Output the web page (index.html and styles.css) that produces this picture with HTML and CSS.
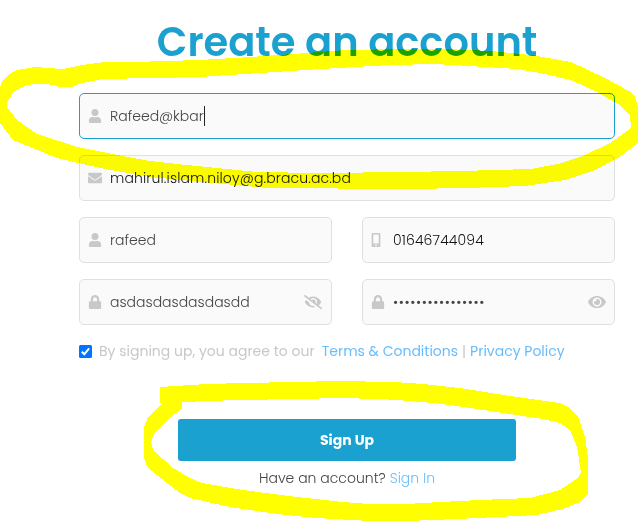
FILE: index.html
```
<!DOCTYPE html>
<html lang="en">
<head>
<meta charset="utf-8">
<title>Create an account</title>
<link rel="stylesheet" href="styles.css">
</head>
<body>
<svg class="sprite" aria-hidden="true">
  <symbol id="user" viewBox="0 0 448 512"><path d="M224 256a128 128 0 1 0 0-256 128 128 0 0 0 0 256zm90 32h-17a174 174 0 0 1-146 0h-17C60 288 0 348 0 422v42c0 27 21 48 48 48h352c27 0 48-21 48-48v-42c0-74-60-134-134-134z"/></symbol>
  <symbol id="mail" viewBox="0 0 512 512"><path d="M502 191c4-3 10 0 10 5v204c0 27-21 48-48 48H48c-27 0-48-21-48-48V196c0-5 6-8 10-5 22 17 52 40 155 114 21 15 57 48 91 48s71-33 91-48c103-74 133-97 155-114zM256 320c23 0 57-29 74-42 133-96 143-105 173-128 6-5 9-12 9-19v-19c0-27-21-48-48-48H48c-27 0-48 21-48 48v19c0 7 3 14 9 19 30 23 40 32 173 128 17 13 51 42 74 42z"/></symbol>
  <symbol id="phone" viewBox="0 0 320 512"><path fill-rule="evenodd" d="M272 0H48C21 0 0 21 0 48v416c0 27 21 48 48 48h224c27 0 48-21 48-48V48c0-27-21-48-48-48zM160 480a32 32 0 1 1 0-64 32 32 0 0 1 0 64zm100-108c0 7-5 12-12 12H72c-7 0-12-5-12-12V66c0-7 5-12 12-12h176c7 0 12 5 12 12z"/></symbol>
  <symbol id="lock" viewBox="0 0 448 512"><path fill-rule="evenodd" d="M400 224h-24v-72a152 152 0 0 0-304 0v72H48c-27 0-48 21-48 48v192c0 27 21 48 48 48h352c27 0 48-21 48-48V272c0-27-21-48-48-48zm-104 0H152v-72a72 72 0 0 1 144 0z"/></symbol>
  <symbol id="eye" viewBox="0 0 576 512"><path fill-rule="evenodd" d="M572 241C518 136 411 64 288 64S58 136 4 241a32 32 0 0 0 0 30c54 105 161 177 284 177s230-72 284-177a32 32 0 0 0 0-30zM288 400a144 144 0 1 1 0-288 144 144 0 0 1 0 288zm0-240a95 95 0 0 0-25 4 48 48 0 0 1-67 67 96 96 0 1 0 92-71z"/></symbol>
  <symbol id="eye-off" viewBox="0 0 640 512"><path d="M320 400c-76 0-137-59-143-134L72 185c-14 17-27 36-37 56a32 32 0 0 0 0 30c55 105 162 177 285 177 27 0 53-4 78-10l-52-40c-8 1-17 2-26 2zm314 58L523 373c34-28 61-63 82-102a32 32 0 0 0 0-30C550 136 443 64 320 64c-51 0-102 13-147 37L45 3a16 16 0 0 0-22 3L3 31a16 16 0 0 0 3 22l589 456a16 16 0 0 0 22-3l20-25a16 16 0 0 0-3-23zM450 317l-39-31a95 95 0 0 0-115-122 48 48 0 0 1 8 39l-74-57a143 143 0 0 1 220 171z"/></symbol>
</svg>

<main class="signup">
  <h1 class="title">Create an account</h1>
  <form class="form">
    <div class="field wide focused"><svg class="icon"><use href="#user"/></svg><span class="value">Rafeed@kbar</span><i class="caret"></i></div>
    <div class="field wide"><svg class="icon"><use href="#mail"/></svg><span class="value filled">mahirul.islam.niloy@g.bracu.ac.bd</span></div>
    <div class="field"><svg class="icon"><use href="#user"/></svg><span class="value">rafeed</span></div>
    <div class="field"><svg class="icon phone"><use href="#phone"/></svg><span class="value filled">01646744094</span></div>
    <div class="field"><svg class="icon"><use href="#lock"/></svg><span class="value">asdasdasdasdasdd</span><svg class="icon toggle"><use href="#eye-off"/></svg></div>
    <div class="field"><svg class="icon"><use href="#lock"/></svg><span class="value dots">••••••••••••••••</span><svg class="icon toggle eye"><use href="#eye"/></svg></div>
  </form>
  <div class="terms">
    <svg class="check" viewBox="0 0 13 13"><rect width="13" height="13" rx="1.5"/><path d="M2.8 6.8l2.5 2.5 4.8-6"/></svg>
    <span>By signing up, you agree to our</span>
    <a class="conditions">Terms &amp; Conditions</a><span class="bar">|</span><a>Privacy Policy</a>
  </div>
  <button class="submit" type="button">Sign Up</button>
  <p class="signin">Have an account? <a>Sign In</a></p>
</main>

<svg class="marker" viewBox="0 0 638 521" aria-hidden="true">
  <path d="M0 88L2 82 8 75 17 70 35 67 62 69 82 65 105 62 150 61.5 200 60 250 57 300 53.5 345 50 435 48.5 491 51 531 55 571 62 605 78 631 92 635 97 638 107V143L618 158 595 170 565 180 525 186 465 188 408 189 267 188 213 183 150 177 100 168 57 158 13 140 0 123ZM7 103V107L17 120 37 134 78 147 117 155 150 161 187 165 257 172 318 173 408 172 478 170.5 531 169 558 164 585 155 611 142.5 631 128 630 115 618 104 598 92.5 571 80 545 74 518 69 478 66.5 435 64 391 65 320 69 260 73 200 77 103 79 82 83 72 87 60 87 53 85 40 83.5 27 85 13 92Z"/>
  <path d="M160 387L207 384 245 383 293 382 338 381 393 382 423 384 460 388 510 396 560 403 570 408 578 417 585 437 588 457V493L580 502 563 509 537 515 457 519 408 521H370L317 518 277 514 230 507 190 498 180 493 167 483 147 467 144 457V427L148 417 162 403H160ZM182 402V409L167 420 155 432 151 442 153 450 173 468 190 478 202 483 243 490 297 497 343 502 370 504H407L440 502 480 500 530 498 560 490 578 478 581 472 577 447 570 430 560 423 543 419 503 413 477 409 443 404 410 401 380 399 338 398 300 399 237 400Z"/>
</svg>
</body>
</html>
```
FILE: styles.css
```
* { box-sizing: border-box; }
body {
  margin: 0;
  position: relative;
  width: 638px;
  height: 521px;
  overflow: hidden;
  background: #fff;
  color: #444;
  font-family: Poppins, Inter, "Open Sans", sans-serif;
  font-size: 14px;
}
.sprite { display: none; }
.signup { display: flex; flex-direction: column; width: 536px; margin-left: 79px; }
.title {
  margin: 16px 0 0;
  height: 77px;
  line-height: 52px;
  font-size: 40px;
  font-weight: 600;
  text-align: center;
  white-space: nowrap;
  color: #1ba1cf;
}
.form { display: grid; grid-template-columns: 1fr 1fr; gap: 16px 30px; }
.field {
  display: flex;
  align-items: center;
  height: 46px;
  padding: 0 9px;
  border: 1px solid #e0e0e0;
  border-radius: 5px;
  background: #fafafa;
}
.wide { grid-column: 1 / -1; }
.focused { border-color: #1ba1cf; }
.icon { width: 14px; height: 14px; margin-left: -1px; fill: #c8c8c8; flex: none; }
.value { margin-left: 8px; font-weight: 300; white-space: nowrap; }
.filled { color: #111; letter-spacing: 0.13px; }
.phone { margin-left: -3px; margin-right: 2px; }
.caret { width: 1px; height: 20px; background: #222; }
.dots { letter-spacing: 0.62px; }
.toggle { width: 18px; height: 16px; margin-left: auto; }
.eye { margin-right: -1px; }
.terms { display: flex; align-items: center; height: 20px; margin-top: 16px; color: #c8c8c8; white-space: nowrap; }
.check { width: 13px; height: 13px; margin: 1px 7px 0 0; fill: #0075ff; }
.check path { fill: none; stroke: #fff; stroke-width: 2; }
a { color: #67bdfc; }
.conditions { margin-left: 7px; }
.bar { width: 12px; text-align: center; }
.submit {
  width: 338px;
  height: 42px;
  margin: 58px 0 0 99px;
  border: 0;
  border-radius: 3px;
  background: #1ba1cf;
  color: #fff;
  font: inherit;
  font-weight: 700;
}
.signin { margin: 7px 0 0 180px; line-height: 20px; font-weight: 300; white-space: nowrap; }
.marker { position: absolute; inset: 0; width: 638px; height: 521px; fill: #ff0; fill-rule: evenodd; mix-blend-mode: multiply; shape-rendering: crispEdges; }
```
